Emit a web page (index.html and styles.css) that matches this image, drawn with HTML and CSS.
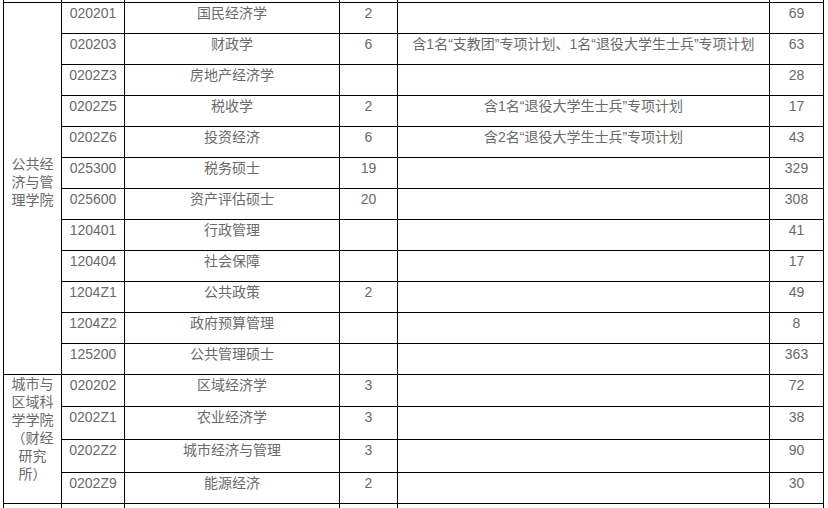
FILE: index.html
```html
<!DOCTYPE html>
<html lang="zh">
<head>
<meta charset="utf-8">
<link rel="stylesheet" href="styles.css">
</head>
<body>
<div class="viewport">
<table class="plan">
<colgroup>
<col class="c-college"><col class="c-code"><col class="c-major"><col class="c-num"><col class="c-note"><col class="c-total">
</colgroup>
<tbody>
<tr class="prev"><td></td><td></td><td></td><td></td><td></td><td></td></tr>
<tr><td class="college first" rowspan="12">公共经济与管理学院</td><td>020201</td><td>国民经济学</td><td>2</td><td></td><td>69</td></tr>
<tr><td>020203</td><td>财政学</td><td>6</td><td>含1名“支教团”专项计划、1名“退役大学生士兵”专项计划</td><td>63</td></tr>
<tr><td>0202Z3</td><td>房地产经济学</td><td></td><td></td><td>28</td></tr>
<tr><td>0202Z5</td><td>税收学</td><td>2</td><td>含1名“退役大学生士兵”专项计划</td><td>17</td></tr>
<tr><td>0202Z6</td><td>投资经济</td><td>6</td><td>含2名“退役大学生士兵”专项计划</td><td>43</td></tr>
<tr><td>025300</td><td>税务硕士</td><td>19</td><td></td><td>329</td></tr>
<tr><td>025600</td><td>资产评估硕士</td><td>20</td><td></td><td>308</td></tr>
<tr><td>120401</td><td>行政管理</td><td></td><td></td><td>41</td></tr>
<tr><td>120404</td><td>社会保障</td><td></td><td></td><td>17</td></tr>
<tr><td>1204Z1</td><td>公共政策</td><td>2</td><td></td><td>49</td></tr>
<tr><td>1204Z2</td><td>政府预算管理</td><td></td><td></td><td>8</td></tr>
<tr><td>125200</td><td>公共管理硕士</td><td></td><td></td><td>363</td></tr>
<tr class="row-32"><td class="college second" rowspan="4">城市与区域科学学院（财经研究所）</td><td>020202</td><td>区域经济学</td><td>3</td><td></td><td>72</td></tr>
<tr class="row-33"><td>0202Z1</td><td>农业经济学</td><td>3</td><td></td><td>38</td></tr>
<tr class="row-33"><td>0202Z2</td><td>城市经济与管理</td><td>3</td><td></td><td>90</td></tr>
<tr><td>0202Z9</td><td>能源经济</td><td>2</td><td></td><td>30</td></tr>
<tr><td></td><td></td><td></td><td></td><td></td><td></td></tr>
</tbody>
</table>
</div>
</body>
</html>
```
FILE: styles.css
```css
html, body {
  margin: 0;
  padding: 0;
  background: #fff;
  overflow: hidden;
}
.viewport {
  width: 828px;
  height: 508px;
  overflow: hidden;
}
.plan {
  margin: -29px 0 0 3px;
  border-collapse: collapse;
  table-layout: fixed;
  width: 821px;
  font-family: "Liberation Sans", "Noto Sans CJK SC", sans-serif;
  font-size: 14px;
  line-height: 18px;
  color: #6a6a6a;
  text-spacing-trim: space-all;
}
.c-college { width: 58px; }
.c-code { width: 63px; }
.c-major { width: 215px; }
.c-num { width: 58px; }
.c-note { width: 372px; }
.c-total { width: 54px; }
.plan td {
  border: 1px solid #000;
  padding: 1px 4px 11px;
  text-align: center;
  vertical-align: top;
  white-space: nowrap;
  overflow: hidden;
}
.plan .prev td { height: 18px; }
.plan td.college {
  white-space: normal;
  overflow: visible;
  padding-left: 2px;
  padding-right: 2px;
}
.plan td.first {
  vertical-align: middle;
  padding-top: 2px;
  padding-bottom: 16px;
}
.plan td.second {
  vertical-align: top;
  padding-top: 0;
  padding-bottom: 0;
}
.plan .row-32 td { padding-bottom: 12px; }
.plan .row-32 td.second { padding-bottom: 0; }
.plan .row-33 td { padding-bottom: 13px; }
```
